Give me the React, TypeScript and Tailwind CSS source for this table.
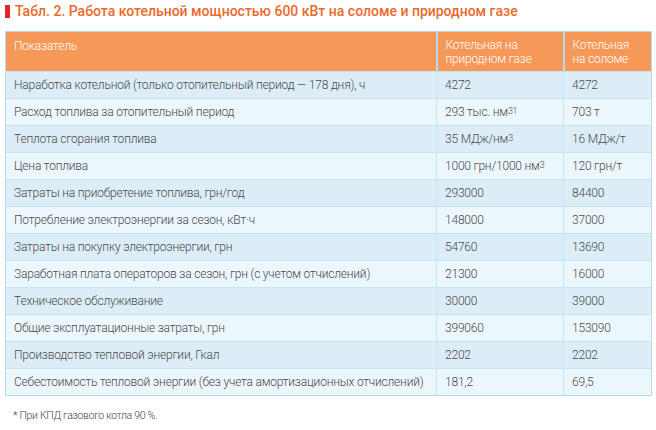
import { FC } from 'react';

type Row = {
	label: string;
	gas: React.ReactNode;
	straw: React.ReactNode;
};

const Sup: FC<{ children: React.ReactNode }> = ({ children }) => (
	<sup className="text-[9px] relative -top-[2px] tracking-[-0.3px]">{children}</sup>
);

const rows: Row[] = [
	{ label: 'Наработка котельной (только отопительный период — 178 дня), ч', gas: '4272', straw: '4272' },
	{
		label: 'Расход топлива за отопительный период',
		gas: (
			<>
				293 тыс. нм<Sup>31</Sup>
			</>
		),
		straw: '703 т',
	},
	{
		label: 'Теплота сгорания топлива',
		gas: (
			<>
				35 МДж/нм<Sup>3</Sup>
			</>
		),
		straw: '16 МДж/т',
	},
	{
		label: 'Цена топлива',
		gas: (
			<>
				1000 грн/1000 нм<Sup>3</Sup>
			</>
		),
		straw: '120 грн/т',
	},
	{ label: 'Затраты на приобретение топлива, грн/год', gas: '293000', straw: '84400' },
	{ label: 'Потребление электроэнергии за сезон, кВт·ч', gas: '148000', straw: '37000' },
	{ label: 'Затраты на покупку электроэнергии, грн', gas: '54760', straw: '13690' },
	{ label: 'Заработная плата операторов за сезон, грн (с учетом отчислений)', gas: '21300', straw: '16000' },
	{ label: 'Техническое обслуживание', gas: '30000', straw: '39000' },
	{ label: 'Общие эксплуатационные затраты, грн', gas: '399060', straw: '153090' },
	{ label: 'Производство тепловой энергии, Гкал', gas: '2202', straw: '2202' },
	{ label: 'Себестоимость тепловой энергии (без учета амортизационных отчислений)', gas: '181,2', straw: '69,5' },
];

const App: FC = () => {
	return (
		<div className="w-[656px] h-[430px] bg-white font-['Roboto',sans-serif] text-[#4a4a4a]">
			<h1 className="flex items-center gap-[5px] pl-[5px] pt-[2px] text-[14px] font-medium text-[#ea6a2c] leading-[18px]">
				<span className="w-[5px] h-[13px] bg-[#e2232a] shrink-0" />
				Табл. 2. Работа котельной мощностью 600 кВт на соломе и природном газе
			</h1>
			<table className="ml-[5px] mt-[11px] w-[646px] table-fixed border-collapse border border-[#b3dcef] text-[12px] font-light tracking-[-0.2px]">
				<colgroup>
					<col className="w-[431px]" />
					<col className="w-[127px]" />
					<col className="w-[88px]" />
				</colgroup>
				<thead>
					<tr className="bg-[#f59858] text-white h-[40px] align-top">
						<th className="text-left font-light px-[8px] pt-[7px] leading-[14px] border-r-[2px] border-[#b3dcef]">Показатель</th>
						<th className="text-left font-light px-[8px] pt-[6px] leading-[14px] border-r-[2px] border-[#b3dcef]">
							Котельная на
							<br />
							природном газе
						</th>
						<th className="text-left font-light px-[8px] pt-[6px] leading-[14px]">
							Котельная
							<br />
							на соломе
						</th>
					</tr>
				</thead>
				<tbody>
					{rows.map((row, i) => (
						<tr
							key={row.label}
							className={`h-[27px] border-t border-[#c6e5f3] ${i % 2 === 0 ? 'bg-[#dcedf8]' : 'bg-[#ecf7fd]'}`}
						>
							<td className="px-[8px] whitespace-nowrap border-r border-[#c6e5f3]">{row.label}</td>
							<td className="px-[8px] whitespace-nowrap border-r border-[#c6e5f3]">{row.gas}</td>
							<td className="px-[8px] whitespace-nowrap">{row.straw}</td>
						</tr>
					))}
				</tbody>
			</table>
			<p className="pl-[13px] pt-[12px] text-[10.5px] font-light tracking-[-0.3px] text-[#444]">* При КПД газового котла 90 %.</p>
		</div>
	);
};

export default App;
